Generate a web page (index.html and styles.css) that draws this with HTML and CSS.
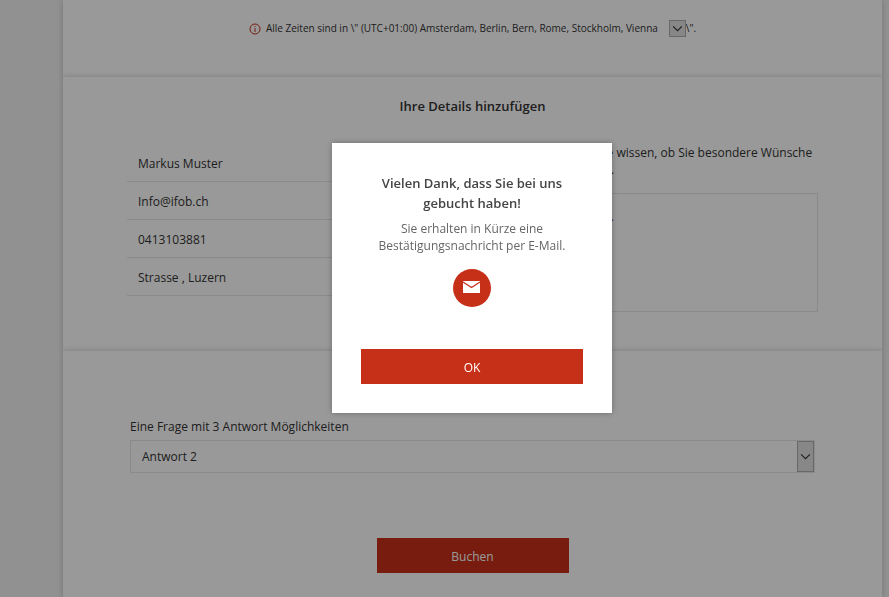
FILE: index.html
```html
<!DOCTYPE html>
<html lang="de">

<head>
    <meta charset="UTF-8">
    <meta name="viewport" content="width=device-width, initial-scale=1.0">
    <title>Buchung</title>
    <link rel="stylesheet" href="styles.css">
</head>

<body>
    <main class="page">
        <section class="card timezone">
            <svg class="info-icon" viewBox="0 0 12 12" aria-hidden="true">
                <circle cx="6" cy="6" r="5" />
                <path d="M6 3v1M6 5v4" />
            </svg>
            <label for="timezone">Alle Zeiten sind in \" (UTC+01:00) Amsterdam, Berlin, Bern, Rome, Stockholm, Vienna</label>
            <span class="select-box small">
                <select id="timezone">
                    <option value="vienna" label=" "></option>
                </select>
                <svg class="arrow" viewBox="0 0 10 10" aria-hidden="true"><path d="M1 3l4 4 4-4" /></svg>
            </span>
            <span>\".</span>
        </section>

        <section class="card details">
            <h2>Ihre Details hinzufügen</h2>
            <div class="columns">
                <div class="fields">
                    <input type="text" aria-label="Name" value="Markus Muster">
                    <input type="email" aria-label="E-Mail" value="Info@ifob.ch">
                    <input type="tel" aria-label="Telefon" value="0413103881">
                    <input type="text" aria-label="Adresse" value="Strasse , Luzern">
                </div>
                <div class="notes">
                    <label for="notes">Lassen Sie uns bitte wissen, ob Sie besondere Wünsche haben. Vielen Dank.</label>
                    <textarea id="notes">Keine Wünsche.</textarea>
                </div>
            </div>
        </section>

        <section class="card question">
            <label for="answer">Eine Frage mit 3 Antwort Möglichkeiten</label>
            <span class="select-box">
                <select id="answer">
                    <option>Antwort 1</option>
                    <option selected>Antwort 2</option>
                    <option>Antwort 3</option>
                </select>
                <svg class="arrow" viewBox="0 0 10 10" aria-hidden="true"><path d="M1 3l4 4 4-4" /></svg>
            </span>
            <button type="button" class="btn">Buchen</button>
        </section>
    </main>

    <!-- Bestätigung -->
    <div class="overlay">
        <div class="modal" role="dialog" aria-modal="true" aria-labelledby="modal-title">
            <h3 id="modal-title">Vielen Dank, dass Sie bei uns gebucht haben!</h3>
            <p>Sie erhalten in Kürze eine Bestätigungsnachricht per E-Mail.</p>
            <svg class="mail-icon" viewBox="0 0 38 38" aria-hidden="true">
                <circle cx="19" cy="19" r="19" fill="#c62f18" />
                <rect x="10" y="12" width="17" height="12" fill="#fff" />
                <path d="M10 13l8.500 5.500 8.500-5.500" fill="none" stroke="#c62f18" stroke-width="1.200" />
            </svg>
            <button type="button" class="btn">OK</button>
        </div>
    </div>
</body>

</html>
```
FILE: styles.css
```css
* {
    margin: 0;
    padding: 0;
    box-sizing: border-box;
}

body {
    font-family: "Open Sans", "Noto Sans", sans-serif;
    font-size: 12px;
    font-weight: 400;
    line-height: 17px;
    color: #333;
    background: #f2f2f2;
    overflow: hidden;
}

input,
select,
textarea,
button {
    font: inherit;
    color: inherit;
    background: none;
    border: none;
    border-radius: 0;
    outline: none;
}

.page {
    padding: 0 7px 0 63px;
}

.card {
    background: #fff;
    box-shadow: 0 0 6px rgba(0, 0, 0, 0.2);
}

/* Zeitzone */
.timezone {
    display: flex;
    justify-content: center;
    align-items: center;
    padding: 20px 0 40px;
    font-size: 10px;
}

.info-icon {
    width: 12px;
    height: 12px;
    margin-right: 5px;
    fill: none;
    stroke: #c62f18;
}

.select-box {
    position: relative;
    display: block;
}

.select-box select {
    appearance: none;
    display: block;
    width: 100%;
    height: 33px;
    padding: 0 11px;
    border: 1px solid #e6e6e6;
}

.arrow {
    position: absolute;
    top: 1px;
    right: 1px;
    bottom: 1px;
    width: 17px;
    height: calc(100% - 2px);
    padding: 2px;
    background: #e1e1e1;
    border: 1px solid #adadad;
    fill: none;
    stroke: #333;
    pointer-events: none;
}

.small {
    width: 17px;
    height: 17px;
    margin-left: 11px;
}

.small select {
    height: 17px;
    padding: 0;
    border: none;
}

.small .arrow {
    top: 0;
    right: 0;
    height: 17px;
}

/* Details */
.details {
    padding: 19px 64px 39px;
}

h2 {
    font-size: 13px;
    font-weight: 600;
    line-height: 20px;
    text-align: center;
}

.columns {
    display: grid;
    grid-template-columns: 1fr 331px;
    gap: 29px;
    margin-top: 28px;
}

.fields input {
    display: block;
    width: 100%;
    height: 38px;
    padding: 1px 11px 0;
    border-bottom: 1px solid #e6e6e6;
}

.notes label {
    display: block;
    padding-left: 16px;
}

.notes textarea {
    display: block;
    width: 100%;
    height: 119px;
    margin-top: 15px;
    padding: 14px 37px;
    border: 1px solid #e6e6e6;
    resize: none;
}

/* Frage */
.question {
    padding: 67px 67px 24px;
}

.question label {
    display: block;
    margin-bottom: 5px;
}

.btn {
    display: block;
    width: 192px;
    height: 35px;
    padding-top: 1px;
    color: #fff;
    background: #c62f18;
    cursor: pointer;
}

.question .btn {
    margin: 65px auto 0;
}

.overlay {
    position: fixed;
    inset: 0;
    padding: 143px 8px 0 63px;
    background: rgba(0, 0, 0, 0.4);
}

.modal {
    width: 280px;
    margin: 0 auto;
    padding: 30px 29px 29px;
    text-align: center;
    background: #fff;
    box-shadow: 0 0 6px rgba(0, 0, 0, 0.3);
}

.modal h3 {
    padding: 0 16px;
    font-size: 13px;
    font-weight: 600;
    line-height: 20px;
    color: #444;
}

.modal p {
    margin-top: 7px;
    color: #666;
}

.mail-icon {
    display: block;
    width: 38px;
    height: 38px;
    margin: 15px auto 42px;
}

.modal .btn {
    width: 100%;
}
```
